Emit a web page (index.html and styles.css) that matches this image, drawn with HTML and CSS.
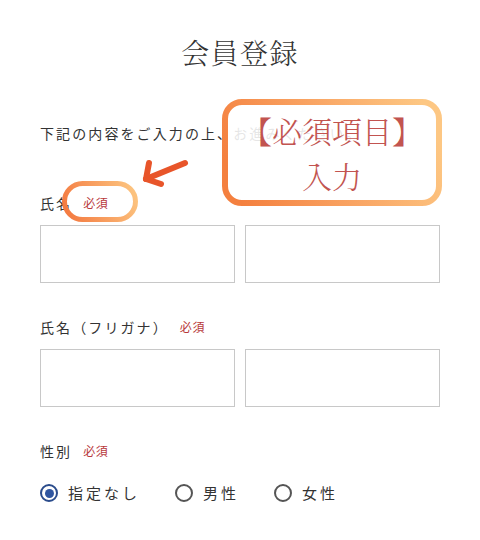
FILE: index.html
```html
<!DOCTYPE html>
<html lang="ja">
<head>
<meta charset="utf-8">
<link rel="stylesheet" href="styles.css">
</head>
<body>
<div class="page">
  <h1 class="title">会員登録</h1>
  <p class="intro">下記の内容をご入力の上、お進みください。</p>

  <div class="field">
    <div class="label">氏名<span class="req">必須</span></div>
    <div class="inputs">
      <input class="box" type="text">
      <input class="box" type="text">
    </div>
  </div>

  <div class="field">
    <div class="label">氏名（フリガナ）<span class="req">必須</span></div>
    <div class="inputs">
      <input class="box" type="text">
      <input class="box" type="text">
    </div>
  </div>

  <div class="field gender">
    <div class="label">性別<span class="req">必須</span></div>
    <div class="radios">
      <label class="radio"><span class="dot checked"></span>指定なし</label>
      <label class="radio"><span class="dot"></span>男性</label>
      <label class="radio"><span class="dot"></span>女性</label>
    </div>
  </div>

  <svg class="marks" width="480" height="540" viewBox="0 0 480 540">
    <defs>
      <linearGradient id="g1" x1="0" y1="0.6" x2="1" y2="0.4">
        <stop offset="0" stop-color="#f4803f"/>
        <stop offset="0.5" stop-color="#f9a463"/>
        <stop offset="1" stop-color="#fdc783"/>
      </linearGradient>
      <linearGradient id="g2" x1="0" y1="0.6" x2="1" y2="0.4">
        <stop offset="0" stop-color="#f47c42"/>
        <stop offset="1" stop-color="#fcc27e"/>
      </linearGradient>
    </defs>
    <rect x="225" y="102" width="214" height="101" rx="17" fill="rgba(255,255,255,0.88)" stroke="url(#g1)" stroke-width="6"/>
    <rect x="64.5" y="183.5" width="71" height="36" rx="18" fill="none" stroke="url(#g2)" stroke-width="5"/>
    <g stroke="#e8552a" stroke-width="6" stroke-linecap="round" stroke-linejoin="round" fill="none">
      <line x1="185" y1="163" x2="146" y2="179"/>
      <polyline points="149,163 146,179 161,184"/>
    </g>
  </svg>
  <div class="callout">【必須項目】<br>入力</div>
</div>
</body>
</html>
```
FILE: styles.css
```css
* { box-sizing: border-box; }
html, body { margin: 0; padding: 0; background: #fff; }
body {
  font-family: "Noto Sans CJK JP", "Noto Sans", sans-serif;
  color: #333;
}
.page {
  position: relative;
  width: 480px;
  height: 540px;
  padding: 0 40px;
  overflow: hidden;
}
.title {
  margin: 32px 0 0;
  font-family: "Noto Serif CJK JP", "Liberation Serif", "Noto Sans CJK JP", serif;
  font-weight: 300;
  font-size: 28px;
  line-height: 40px;
  text-align: center;
  letter-spacing: 0.05em;
  color: #333;
}
.intro {
  margin: 51px 0 0;
  font-size: 14px;
  line-height: 20px;
  letter-spacing: 0.15em;
  white-space: nowrap;
}
.field { margin-top: 50px; }
.field + .field { margin-top: 34px; }
.label {
  display: flex;
  align-items: center;
  font-size: 14px;
  line-height: 20px;
  letter-spacing: 0.15em;
}
.req {
  margin-left: 11px;
  font-size: 12px;
  color: #b8393b;
  letter-spacing: 0.05em;
}
.inputs {
  display: flex;
  gap: 10px;
  margin-top: 12px;
}
.box {
  width: 195px;
  height: 58px;
  border: 1px solid #c8c8c8;
  border-radius: 0;
  background: #fff;
  margin: 0;
  padding: 0 10px;
  outline: none;
}
.radios {
  display: flex;
  gap: 35px;
  margin-top: 22px;
}
.radio {
  display: flex;
  align-items: center;
  gap: 10px;
  font-size: 15px;
  line-height: 20px;
  letter-spacing: 0.2em;
  color: #333;
}
.dot {
  width: 18px;
  height: 18px;
  border: 2.5px solid #555;
  border-radius: 50%;
  display: flex;
  align-items: center;
  justify-content: center;
}
.dot.checked { border-color: #2b4c8c; }
.dot.checked::after {
  content: "";
  width: 9px;
  height: 9px;
  border-radius: 50%;
  background: #2f55a0;
}
.marks {
  position: absolute;
  left: 0;
  top: 0;
  pointer-events: none;
}
.callout {
  position: absolute;
  left: 225px;
  top: 108px;
  width: 214px;
  text-align: center;
  font-family: "Noto Serif CJK JP", "Noto Sans CJK JP", serif;
  font-weight: 300;
  font-size: 30px;
  line-height: 45px;
  color: #c25450;
}
```
